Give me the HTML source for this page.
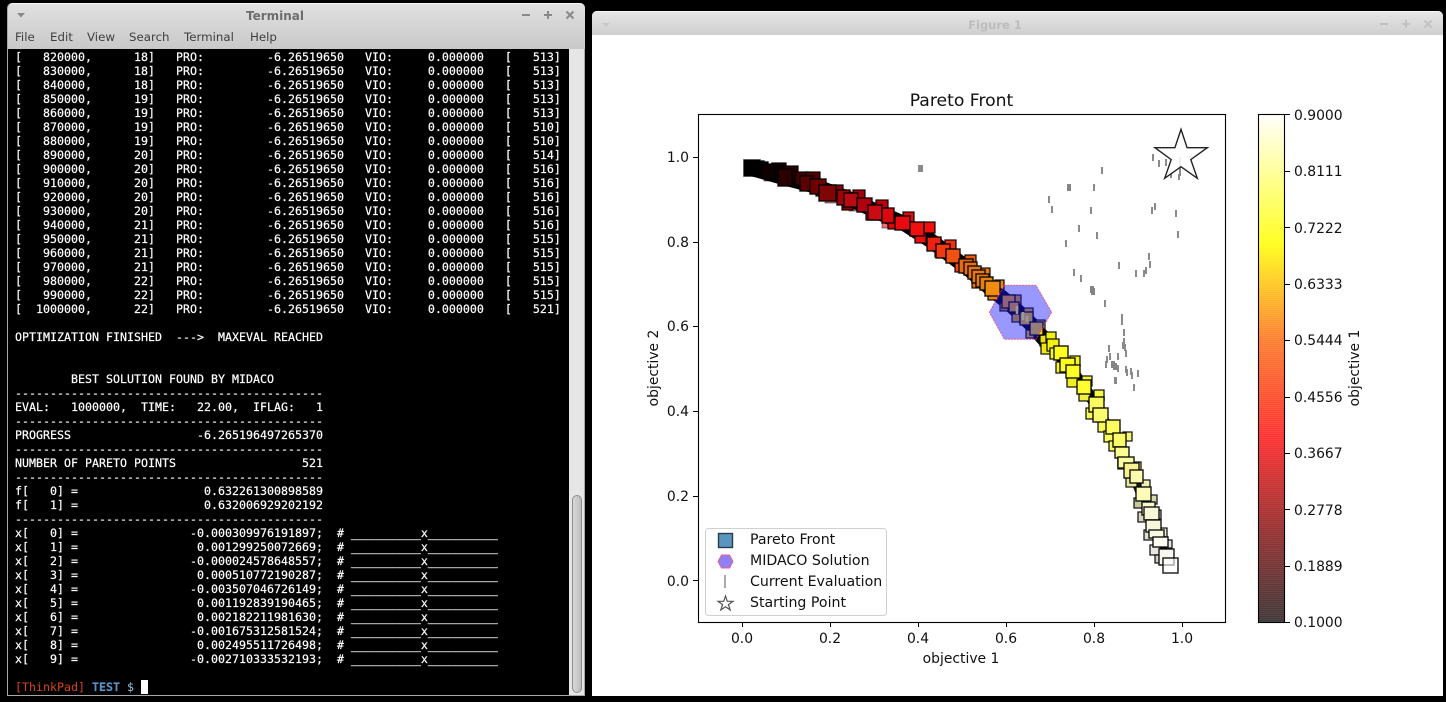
<!DOCTYPE html>
<html><head><meta charset="utf-8"><title>Terminal and Figure 1</title>
<style>
html,body{margin:0;padding:0;background:#000;width:1446px;height:702px;overflow:hidden}
div,pre{position:absolute;margin:0}
#tw{left:7px;top:3px;width:578px;height:693px;background:#000;border-radius:5px 5px 0 0;box-shadow:inset 0 0 0 1px #a8a8a8}
#tb{left:8px;top:4px;width:577px;height:45px;background:linear-gradient(#e0e0e0,#c9c9c9);border-top:1px solid #f4f4f4;margin-top:-1px;border-radius:5px 5px 0 0}
#tt{left:235px;top:9px;width:80px;text-align:center;font:bold 12px "DejaVu Sans",sans-serif;color:#6e6e6e;line-height:14px}
.m{top:30px;font:11.800px/14px "DejaVu Sans",sans-serif;color:#3f3f3f}
#sb{left:569px;top:49px;width:15px;height:646px;background:#e6e6e6}
#th{left:572px;top:495px;width:8px;height:196px;background:linear-gradient(90deg,#d8d8d8,#bdbdbd);border:1px solid #8e8e8e;border-radius:5px}
#term{left:15px;top:50px;font:11.63px/14px "DejaVu Sans Mono","Liberation Mono",monospace;color:#fff;white-space:pre;-webkit-text-stroke:.2px #fff}
#term .a{color:#d8431a;-webkit-text-stroke:0}
#term .b{color:#5c8fc4;-webkit-text-stroke:.2px #5c8fc4}
#term .c{color:#9cc4e4;-webkit-text-stroke:0}
#fw{left:592px;top:11px;width:851px;height:685px;background:#fff;border-radius:5px 5px 0 0}
#fb{left:592px;top:11px;width:851px;height:24px;background:linear-gradient(#e6e6e6,#cfcfcf);border-top:1px solid #f6f6f6;box-sizing:border-box;border-radius:5px 5px 0 0}
#ft{left:945px;top:18px;width:100px;text-align:center;font:bold 11.500px/14px "DejaVu Sans",sans-serif;color:#bcbcbc}
#cb{left:1258px;top:114px;width:27px;height:508px;background:repeating-linear-gradient(0deg,rgba(255,255,255,.07) 0 1px,rgba(255,255,255,0) 1px 2px),linear-gradient(0deg,#403838 0%,#973333 18%,#ff3333 36.5%,#ff8033 55.6%,#ffff1e 74.6%,#fffffc 100%)}
svg{position:absolute;left:0;top:0}
svg text{font-family:"DejaVu Sans",sans-serif;fill:#111}
</style></head><body>
<div id="tw"></div>
<div id="tb"></div>
<div id="tt">Terminal</div>
<div class="m" style="left:15px">File</div>
<div class="m" style="left:50px">Edit</div>
<div class="m" style="left:87px">View</div>
<div class="m" style="left:129px">Search</div>
<div class="m" style="left:184px">Terminal</div>
<div class="m" style="left:250px">Help</div>
<div id="sb"></div><div id="th"></div>
<pre id="term">[   820000,      18]   PRO:         -6.26519650   VIO:     0.000000   [   513]
[   830000,      18]   PRO:         -6.26519650   VIO:     0.000000   [   513]
[   840000,      18]   PRO:         -6.26519650   VIO:     0.000000   [   513]
[   850000,      19]   PRO:         -6.26519650   VIO:     0.000000   [   513]
[   860000,      19]   PRO:         -6.26519650   VIO:     0.000000   [   513]
[   870000,      19]   PRO:         -6.26519650   VIO:     0.000000   [   510]
[   880000,      19]   PRO:         -6.26519650   VIO:     0.000000   [   510]
[   890000,      20]   PRO:         -6.26519650   VIO:     0.000000   [   514]
[   900000,      20]   PRO:         -6.26519650   VIO:     0.000000   [   516]
[   910000,      20]   PRO:         -6.26519650   VIO:     0.000000   [   516]
[   920000,      20]   PRO:         -6.26519650   VIO:     0.000000   [   516]
[   930000,      20]   PRO:         -6.26519650   VIO:     0.000000   [   516]
[   940000,      21]   PRO:         -6.26519650   VIO:     0.000000   [   516]
[   950000,      21]   PRO:         -6.26519650   VIO:     0.000000   [   515]
[   960000,      21]   PRO:         -6.26519650   VIO:     0.000000   [   515]
[   970000,      21]   PRO:         -6.26519650   VIO:     0.000000   [   515]
[   980000,      22]   PRO:         -6.26519650   VIO:     0.000000   [   515]
[   990000,      22]   PRO:         -6.26519650   VIO:     0.000000   [   515]
[  1000000,      22]   PRO:         -6.26519650   VIO:     0.000000   [   521]

OPTIMIZATION FINISHED  ---&gt;  MAXEVAL REACHED


        BEST SOLUTION FOUND BY MIDACO
--------------------------------------------
EVAL:   1000000,  TIME:   22.00,  IFLAG:   1
--------------------------------------------
PROGRESS                  -6.265196497265370
--------------------------------------------
NUMBER OF PARETO POINTS                  521
--------------------------------------------
f[   0] =                  0.632261300898589
f[   1] =                  0.632006929202192
--------------------------------------------
x[   0] =                -0.000309976191897;  # __________x__________
x[   1] =                 0.001299250072669;  # __________x__________
x[   2] =                -0.000024578648557;  # __________x__________
x[   3] =                 0.000510772190287;  # __________x__________
x[   4] =                -0.003507046726149;  # __________x__________
x[   5] =                 0.001192839190465;  # __________x__________
x[   6] =                 0.002182211981630;  # __________x__________
x[   7] =                -0.001675312581524;  # __________x__________
x[   8] =                 0.002495511726498;  # __________x__________
x[   9] =                -0.002710333532193;  # __________x__________

<span class="a">[ThinkPad]</span> <b class="b">TEST</b> <span class="c">$</span> </pre>
<div style="left:141px;top:680px;width:7px;height:14px;background:#fff"></div>
<div id="fw"></div>
<div id="fb"></div>
<div id="ft">Figure 1</div>
<div id="cb"></div>
<svg width="1446" height="702" viewBox="0 0 1446 702">
<!-- window controls -->
<path d="M17 13h8l-4 4.500z" fill="#8a8a8a"/>
<path d="M522 15h8M544 15h8M548 11v8M566.500 11.500l7 7M573.500 11.500l-7 7" stroke="#8a8a8a" stroke-width="2" fill="none"/>
<path d="M602 23h8l-4 4z" fill="#c8c8c8"/>
<path d="M1380 24h8M1402 24h8M1406 20v8M1424.500 20.500l7 7M1431.500 20.500l-7 7" stroke="#c2c2c2" stroke-width="2" fill="none"/>

<!-- faint under squares -->
<g stroke="#000" stroke-width="1" stroke-opacity=".45" fill-opacity=".75">
<path fill="#503038" d="M764 165h9v16h-9z"/>
<path fill="#a04050" d="M825 190h11v13h-11z"/>
<path fill="#d04050" d="M849 198h8v13h-8z"/>
<path fill="#e84050" d="M882 214h12v14h-12z"/>
<path fill="#e84050" d="M915 230h8v12h-8z"/>
</g>
<!-- band -->
<path d="M750 168L785 178L815 186L850 199L880 213L905 224L930 240L950 255L970 270L990 288L1010 304L1030 323L1045 340" fill="none" stroke="#000" stroke-width="15" stroke-linejoin="round"/>
<path d="M1045 340L1050 345L1070 368L1085 388L1100 412" fill="none" stroke="#000" stroke-width="11" stroke-linejoin="round"/>
<path d="M1100 412L1115 438L1125 460L1135 480L1145 505L1155 530L1165 555" fill="none" stroke="#1c1c10" stroke-width="9" stroke-linejoin="round"/>

<!-- dense small squares -->
<g stroke="#000" stroke-width="1.300" stroke-opacity=".9">
<path fill="#1a0000" d="M772 163h14v14h-14z"/>
<path fill="#280000" d="M784 166h14v14h-14z"/>
<path fill="#400000" d="M795 172h13v13h-13z"/>
<path fill="#500000" d="M806 172h14v14h-14z"/>
<path fill="#680000" d="M816 184h12v12h-12z"/>
<path fill="#880000" d="M830 185h13v13h-13z"/>
<path fill="#900000" d="M842 199h11v11h-11z"/>
<path fill="#a80008" d="M853 190h12v12h-12z"/>
<path fill="#b80008" d="M866 208h12v12h-12z"/>
<path fill="#c00008" d="M876 200h12v12h-12z"/>
<path fill="#d80808" d="M888 218h11v11h-11z"/>
<path fill="#e00808" d="M903 212h11v11h-11z"/>
<path fill="#ea1010" d="M915 232h11v11h-11z"/>
<path fill="#f01010" d="M924 222h11v11h-11z"/>
<path fill="#f02010" d="M935 247h10v10h-10z"/>
<path fill="#f03010" d="M945 240h11v11h-11z"/>
<path fill="#f04810" d="M955 262h10v10h-10z"/>
<path fill="#f05810" d="M965 255h11v11h-11z"/>
<path fill="#e87010" d="M972 278h10v10h-10z"/>
<path fill="#e87810" d="M980 268h10v10h-10z"/>
<path fill="#e88410" d="M988 290h10v10h-10z"/>
<path fill="#e88c10" d="M995 280h9v9h-9z"/>
<path fill="#d89010" d="M1000 303h8v8h-8z"/>
<path fill="#e09c10" d="M1012 295h9v9h-9z"/>
<path fill="#e0a810" d="M1012 314h8v8h-8z"/>
<path fill="#e0b010" d="M1024 308h9v9h-9z"/>
<path fill="#e0c010" d="M1026 330h8v8h-8z"/>
<path fill="#e0c810" d="M1036 320h9v9h-9z"/>
<path fill="#e8e010" d="M1040 335h11v11h-11z"/>
<path fill="#f0f010" d="M1046 332h10v10h-10z"/>
<path fill="#f0e810" d="M1041 343h11v11h-11z"/>
<path fill="#f4f014" d="M1047 339h12v12h-12z"/>
<path fill="#f8f818" d="M1050 348h11v11h-11z"/>
<path fill="#f8f818" d="M1056 362h12v11h-12z"/>
<path fill="#f8f820" d="M1070 356h10v10h-10z"/>
<path fill="#f0f020" d="M1067 376h11v11h-11z"/>
<path fill="#f8f830" d="M1082 376h10v10h-10z"/>
<path fill="#f0f040" d="M1079 390h11v11h-11z"/>
<path fill="#f8f848" d="M1094 390h10v10h-10z"/>
<path fill="#f8f858" d="M1086 408h11v11h-11z"/>
<path fill="#f8f858" d="M1098 420h10v12h-10z"/>
<path fill="#f8f860" d="M1104 431h11v11h-11z"/>
<path fill="#f8f860" d="M1109 441h11v10h-11z"/>
<path fill="#f8f878" d="M1123 432h9v9h-9z"/>
<path fill="#f8f898" d="M1118 458h11v11h-11z"/>
<path fill="#f0f0a0" d="M1132 462h9v9h-9z"/>
<path fill="#e8e8a0" d="M1126 476h11v11h-11z"/>
<path fill="#f0f0b0" d="M1141 480h9v9h-9z"/>
<path fill="#c8c8a0" d="M1134 498h10v10h-10z"/>
<path fill="#d8d8b0" d="M1148 495h9v9h-9z"/>
<path fill="#d8d8c0" d="M1138 512h10v10h-10z"/>
<path fill="#e0e0c8" d="M1152 510h9v9h-9z"/>
<path fill="#e0e0d0" d="M1144 530h10v10h-10z"/>
<path fill="#e8e8d8" d="M1158 528h9v9h-9z"/>
<path fill="#e8e8e0" d="M1150 545h10v10h-10z"/>
<path fill="#e8e8e0" d="M1164 540h8v8h-8z"/>
<path fill="#d0d0c8" d="M1155 555h10v8h-10z"/>
</g>

<!-- pareto squares -->
<g stroke="#000" stroke-width="1.500" stroke-opacity=".85">
<path fill="#000" d="M744 160h16v16h-16zM749 161h15v15h-15zM755 162h13v14h-13z"/>
<path fill="#100000" d="M762 164h13v14h-13zM768 166h13v14h-13z"/>
<path fill="#2a0000" d="M778 169h14v17h-14z"/>
<path fill="#5a0000" d="M800 176h13v15h-13z"/>
<path fill="#700000" d="M810 179h16v15h-16z"/>
<path fill="#800505" d="M819 185h17v16h-17z"/>
<path fill="#a00008" d="M837 190h13v15h-13z"/>
<path fill="#b80c14" d="M844 193h14v14h-14z"/>
<path fill="#b00010" d="M857 198h15v14h-15z"/>
<path fill="#cc0a14" d="M868 205h14v15h-14z"/>
<path fill="#d80a10" d="M882 208h12v15h-12z"/>
<path fill="#e80a10" d="M895 216h15v14h-15z"/>
<path fill="#f01010" d="M910 222h14v14h-14z"/>
<path fill="#f02010" d="M927 237h14v14h-14z"/>
<path fill="#f03a10" d="M936 244h14v14h-14z"/>
<path fill="#f05010" d="M946 249h14v14h-14z"/>
<path fill="#e86a10" d="M959 259h14v14h-14z"/>
<path fill="#e87010" d="M964 262h13v13h-13z"/>
<path fill="#e87410" d="M968 266h13v13h-13z"/>
<path fill="#e87810" d="M972 270h13v13h-13z"/>
<path fill="#e87c10" d="M976 274h13v13h-13z"/>
<path fill="#e88010" d="M980 277h13v13h-13z"/>
<path fill="#f08c10" d="M985 281h15v15h-15z"/>
<path fill="#f0a010" d="M1002 295h13v13h-13z"/>
<path fill="#f0a810" d="M1009 302h10v10h-10z"/>
<path fill="#f0c010" d="M1020 312h13v13h-13z"/>
<path fill="#f8d010" d="M1030 322h13v13h-13z"/>
<path fill="#ffff20" d="M1054 346h14v14h-14z"/>
<path fill="#ffff20" d="M1060 358h15v14h-15z"/>
<path fill="#ffff28" d="M1066 365h14v13h-14z"/>
<path fill="#ffff30" d="M1077 380h14v14h-14z"/>
<path fill="#f8f860" d="M1089 397h15v15h-15z"/>
<path fill="#fcfc70" d="M1093 408h15v14h-15z"/>
<path fill="#fcfc60" d="M1106 420h14v14h-14z"/>
<path fill="#fcfc68" d="M1113 433h13v14h-13z"/>
<path fill="#fcfc90" d="M1115 447h14v11h-14z"/>
<path fill="#fcfca0" d="M1118 457h16v11h-16z"/>
<path fill="#f8f090" d="M1124 463h15v15h-15z"/>
<path fill="#fcfcb0" d="M1130 470h13v13h-13z"/>
<path fill="#fcfcb8" d="M1136 487h15v14h-15z"/>
<path fill="#f8f8d0" d="M1142 502h13v13h-13z"/>
<path fill="#f8f8d8" d="M1144 507h15v13h-15z"/>
<path fill="#f8f8dc" d="M1146 520h15v12h-15z"/>
<path fill="#fafae4" d="M1149 530h15v8h-15z"/>
<path fill="#fcfcf0" d="M1153 537h15v10h-15z"/>
<path fill="#f8f8f0" d="M1159 549h15v16h-15z"/>
<path fill="#fff" d="M1163 558h15v15h-15z" fill-opacity=".6"/>
</g>

<!-- current evaluation ticks -->
<path stroke="#8a8a8a" stroke-width="2" fill="none" d="M1153 154v7M1159 160v7M1166 159v7M1180 157v7M1180 164v7M1180 169v7M1171 173v5M1179 174v6M1102 167v7M1069 184v7M1094 184v7M1049 196v7M1052 206v7M1091 207v7M1152 207v7M1155 203v7M1176 210v7M1079 225v7M1097 232v7M1178 231v7M1066 240v7M1149 253v7M1150 261v7M1119 262v7M1136 270v7M1144 270v7M1146 267v7M1074 269v7M1081 275v7M1105 300v7M1122 314v7M1122 318v7M1124 329v7M1124 338v7M1123 342v7M1125 344v7M1126 350v7M1109 345v7M1110 353v7M1107 356v7M1106 361v7M1118 353v7M1118 365v7M1126 366v7M1127 369v7M1131 368v7M1132 372v7M1138 370v7M1115 377v7M1116 377v7M1134 384v7"/>
<path stroke="#848484" stroke-width="4" fill="none" d="M1092 286v7M1093 288v7M1113 361v7M1115 363v7M1069 184v7"/>
<rect x="918" y="165" width="5" height="7" fill="#8a8a8a"/>

<!-- hexagon -->
<path d="M1004.300 285.300H1036L1051.700 312.300L1036 339.300H1004.300L989.300 312.300Z" fill="#1414ff" fill-opacity=".44" stroke="#f04060" stroke-width="1" stroke-dasharray="2 1" stroke-opacity=".8"/>
<path stroke="#9a9a9a" stroke-width="2.500" fill="none" d="M1017 306v8M1023 312v8M1027 316v6"/>

<!-- star -->
<path d="M1181 129.400L1187.100 147.700H1207.300L1190.800 159.600L1197.300 178.300L1181 166.700L1164.700 178.300L1171.200 159.600L1155 147.700H1174.900Z" fill="#fff" fill-opacity=".85" stroke="#222" stroke-width="1.400" stroke-linejoin="miter"/>

<!-- axes -->
<rect x="698.500" y="114.500" width="527" height="508" fill="none" stroke="#000" stroke-width="1.100"/>
<path stroke="#000" stroke-width="1" fill="none" d="M742.500 622v5M830.500 622v5M918.500 622v5M1006.500 622v5M1094.500 622v5M1182.500 622v5M693 157.500h5M693 242.500h5M693 326.500h5M693 411.500h5M693 496.500h5M693 580.500h5"/>
<g font-size="13.900" text-anchor="middle">
<text x="742" y="643">0.0</text><text x="830" y="643">0.2</text><text x="918" y="643">0.4</text><text x="1006" y="643">0.6</text><text x="1094" y="643">0.8</text><text x="1182" y="643">1.0</text>
</g>
<g font-size="13.900" text-anchor="end">
<text x="689" y="162">1.0</text><text x="689" y="247">0.8</text><text x="689" y="331">0.6</text><text x="689" y="416">0.4</text><text x="689" y="501">0.2</text><text x="689" y="586">0.0</text>
</g>
<text x="961" y="663" font-size="13.900" text-anchor="middle">objective 1</text>
<text transform="translate(658 368) rotate(-90)" font-size="13.900" text-anchor="middle">objective 2</text>
<text x="961.500" y="106" font-size="17.200" text-anchor="middle">Pareto Front</text>

<!-- legend -->
<rect x="705.500" y="528.500" width="181" height="87" rx="3" fill="#fff" fill-opacity=".85" stroke="#d0d0d0"/>
<rect x="718.500" y="533.500" width="14" height="14" fill="#5a95c0" stroke="#2c3c46" stroke-width="1.400"/>
<path d="M721.500 555h8l3.500 6.500l-3.500 6.500h-8l-3.500-6.500z" fill="#8f80f5" stroke="#e8608a" stroke-width="1"/>
<path d="M725 575v13" stroke="#aaa" stroke-width="2"/>
<path d="M725.500 596L727.300 601.300H733L728.400 604.600L730.200 610L725.500 606.700L720.800 610L722.600 604.600L718 601.300H723.700Z" fill="#fff" stroke="#555" stroke-width="1.200"/>
<g font-size="14.150">
<text x="750" y="544">Pareto Front</text>
<text x="750" y="565">MIDACO Solution</text>
<text x="750" y="586">Current Evaluation</text>
<text x="750" y="607">Starting Point</text>
</g>

<!-- colorbar -->
<rect x="1258.500" y="114.500" width="26" height="508" fill="none" stroke="#000" stroke-width="1.100"/>
<path stroke="#000" stroke-width="1" fill="none" d="M1285 114.500h5M1285 171.500h5M1285 227.500h5M1285 284.500h5M1285 340.500h5M1285 397.500h5M1285 453.500h5M1285 509.500h5M1285 566.500h5M1285 622.500h5"/>
<g font-size="13.900">
<text x="1294" y="120">0.9000</text><text x="1294" y="176">0.8111</text><text x="1294" y="233">0.7222</text><text x="1294" y="289">0.6333</text><text x="1294" y="345">0.5444</text><text x="1294" y="402">0.4556</text><text x="1294" y="458">0.3667</text><text x="1294" y="515">0.2778</text><text x="1294" y="571">0.1889</text><text x="1294" y="627">0.1000</text>
</g>
<text transform="translate(1359 368) rotate(-90)" font-size="13.900" text-anchor="middle">objective 1</text>
</svg>
</body></html>
